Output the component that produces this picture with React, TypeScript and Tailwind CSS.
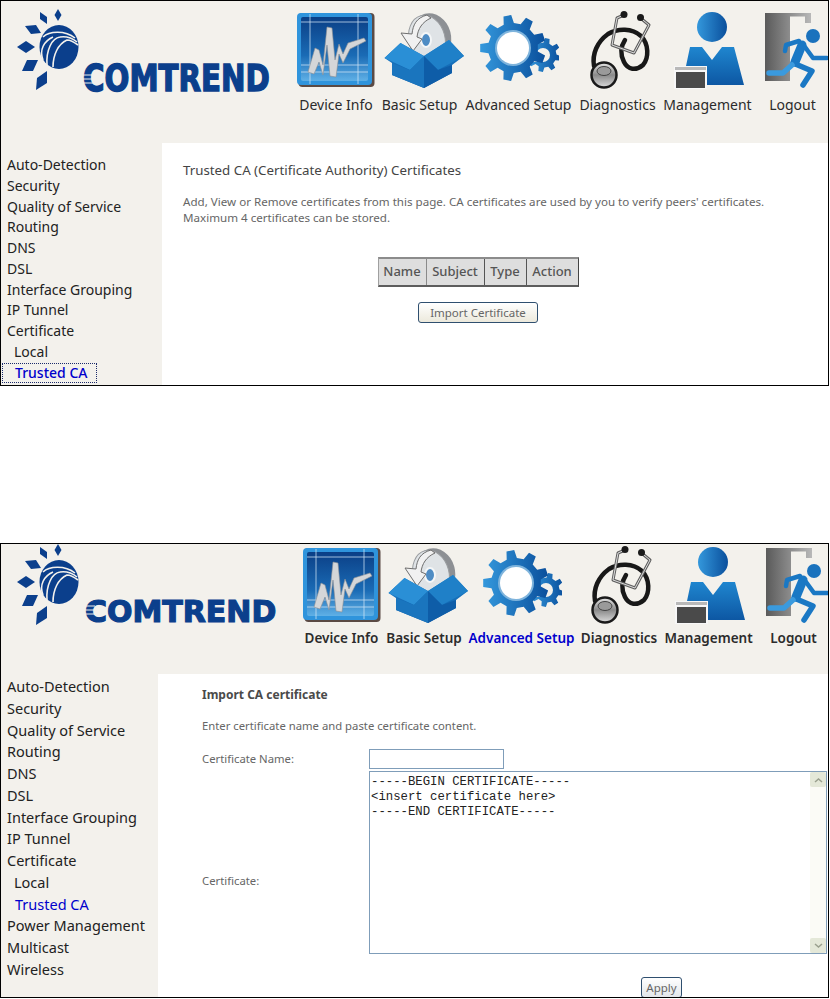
const sans = { fontFamily: '"Noto Sans", sans-serif' }

function range(n: number) {
  return Array.from({ length: n }, (_, i) => i)
}

// toothed outline for the two gears
function gearPath(cx: number, cy: number, outer: number, inner: number, teeth: number, rot = 0) {
  const pts: string[] = []
  range(teeth).forEach(i => {
    const step = (Math.PI * 2) / teeth
    const a = i * step + rot
    const at = (r: number, t: number) => `${(cx + r * Math.cos(a + t * step)).toFixed(1)},${(cy + r * Math.sin(a + t * step)).toFixed(1)}`
    pts.push(at(inner, -0.3), at(outer, -0.17), at(outer, 0.17), at(inner, 0.3))
  })
  return 'M' + pts.join('L') + 'Z'
}

function Defs() {
  return (
    <svg className="absolute w-0 h-0" aria-hidden="true">
      <defs>
        <linearGradient id="boxInner" x1="0" y1="0" x2="0" y2="1">
          <stop offset="0" stopColor="#0b3f86" />
          <stop offset="0.6" stopColor="#1a6bb5" />
          <stop offset="1" stopColor="#5fb0e6" />
        </linearGradient>
        <linearGradient id="blueV" x1="0" y1="0" x2="0" y2="1">
          <stop offset="0" stopColor="#1f86cf" />
          <stop offset="1" stopColor="#0d57a3" />
        </linearGradient>
        <linearGradient id="blueH" x1="0" y1="0" x2="1" y2="0">
          <stop offset="0" stopColor="#3498dc" />
          <stop offset="1" stopColor="#0a4f9c" />
        </linearGradient>
        <linearGradient id="door" x1="0" y1="0" x2="1" y2="0">
          <stop offset="0" stopColor="#5a5a5a" />
          <stop offset="1" stopColor="#b8b8b8" />
        </linearGradient>
        <linearGradient id="metal" x1="0" y1="0" x2="0" y2="1">
          <stop offset="0" stopColor="#e8e8e8" />
          <stop offset="0.5" stopColor="#8a8a8a" />
          <stop offset="1" stopColor="#dcdcdc" />
        </linearGradient>
      </defs>
    </svg>
  )
}

function DeviceIcon() {
  return (
    <svg width="80" height="80" viewBox="0 0 80 80">
      <rect x="2.5" y="3" width="76" height="74" rx="4" fill="#5a4a44" />
      <rect x="1" y="3" width="75" height="72" rx="4" fill="#2f94dc" />
      <rect x="5" y="7" width="67" height="64" rx="2" fill="url(#boxInner)" />
      <path d="M14 4V74M62 4V74M5 12H72M5 55H72M5 62H72" stroke="#cfe4f5" strokeWidth="1" opacity="0.75" fill="none" />
      <path d="M12 62L19 38L23 40L27 55L31 17L36 18L39 50L43 34L47 44L52 33L68 28L70 31L54 39L47 53L43 44L40 67L34 66L31 35L27 65L23 52L18 64Z" fill="#d4d6d8" stroke="#8b8f93" strokeWidth="0.6" />
    </svg>
  )
}

function SetupIcon() {
  return (
    <svg width="80" height="80" viewBox="0 0 80 80" className="overflow-visible">
      <ellipse cx="51" cy="27" rx="20" ry="24" transform="rotate(-15 51 27)" fill="#8d9094" />
      <ellipse cx="47" cy="29" rx="18" ry="24" transform="rotate(-15 47 29)" fill="#dfe3e6" stroke="#9a9da0" strokeWidth="1" />
      <ellipse cx="46" cy="30" rx="5" ry="7" fill="#4e8cc4" stroke="#f4f6f7" strokeWidth="2" />
      <path d="M47 5C36 8 33 15 32 24L21 23L33 41L42 29L37 27C38 19 42 12 51 8Z" fill="#f1f1f1" stroke="#6f6f6f" strokeWidth="1" />
      <path d="M4.5 48L20.5 33L44 46L69 30L84 46L72 55V63L44 78L12 65V53Z" fill="url(#blueV)" />
      <path d="M4.5 48L20.5 33L44 46L30 60Z" fill="#2a8fd6" />
      <path d="M84 46L69 30L44 46L58 60Z" fill="#1f80c8" />
      <path d="M12 53L30 60L44 46V78L12 65Z" fill="#1a75be" />
      <path d="M44 46L58 60L72 55V63L44 78Z" fill="#0e5da8" />
    </svg>
  )
}

function GearIcon() {
  return (
    <svg width="80" height="80" viewBox="0 0 80 80">
      <path d={gearPath(65, 45, 17, 12.5, 8, 0.2)} fill="url(#blueH)" />
      <circle cx="64" cy="45" r="7" fill="#f3f1ec" />
      <rect x="50" y="39" width="8" height="13" fill="#f3f1ec" />
      <path d={gearPath(34, 38, 33, 25, 9, 0.35)} fill="url(#blueH)" />
      <circle cx="34" cy="38" r="18" fill="#7fb4dc" />
      <circle cx="34" cy="38" r="16" fill="#ffffff" />
    </svg>
  )
}

function StethoscopeIcon() {
  return (
    <svg width="80" height="80" viewBox="0 0 80 80" fill="none">
      <path d="M16 56C14 44 19 32 30 24C40 18 54 18 63 26C71 34 71 48 65 55C58 61 50 60 46 52C42 44 43 36 47 30" stroke="#181818" strokeWidth="4.5" strokeLinecap="round" />
      <path d="M46 5L39 8L34 35L56 43L71 15L62.5 8" stroke="#5f5f5f" strokeWidth="3" strokeLinejoin="round" />
      <path d="M46 5L39 8L34 35L56 43L71 15L62.5 8" stroke="#dcdcdc" strokeWidth="1" strokeLinejoin="round" />
      <circle cx="46" cy="4.5" r="3.5" fill="#1a1a1a" />
      <circle cx="62.5" cy="7.5" r="3.5" fill="#1a1a1a" />
      <circle cx="26" cy="65" r="12.5" fill="url(#metal)" stroke="#1a1a1a" strokeWidth="2.5" />
      <ellipse cx="26" cy="61" rx="7" ry="4.5" fill="#9a9a9a" stroke="#444444" strokeWidth="1" />
    </svg>
  )
}

function ManagementIcon() {
  return (
    <svg width="80" height="80" viewBox="0 0 80 80">
      <circle cx="44" cy="17" r="15" fill="url(#blueH)" />
      <path d="M22 37H34L44 50L54 37H66L76 75H14Z" fill="url(#blueV)" />
      <rect x="6" y="56" width="33" height="23" fill="#f7f7f7" />
      <rect x="7" y="57" width="31" height="3" fill="#b9b9b9" />
      <rect x="8" y="62" width="29" height="16" fill="#4a4a4a" />
    </svg>
  )
}

function LogoutIcon() {
  return (
    <svg width="80" height="80" viewBox="0 0 80 80" fill="none">
      <path d="M13 3H59V13H53V6.5H38V71H13Z" fill="url(#door)" />
      <circle cx="61" cy="26" r="7" fill="#1a72bd" />
      <g stroke="#1a78c4" strokeLinecap="round" strokeLinejoin="round">
        <path d="M50 35L43 52" strokeWidth="9" />
        <path d="M47 31L34 35L33 41" strokeWidth="4.5" />
        <path d="M53 37L61 48L75 48" strokeWidth="4.5" />
        <path d="M41 53L60 61L51 75" strokeWidth="5.5" />
        <path d="M40 55L31 63L17 63" strokeWidth="5.5" stroke="#3a9ade" />
      </g>
    </svg>
  )
}

const navItems = [
  { label: 'Device Info', Icon: DeviceIcon },
  { label: 'Basic Setup', Icon: SetupIcon },
  { label: 'Advanced Setup', Icon: GearIcon },
  { label: 'Diagnostics', Icon: StethoscopeIcon },
  { label: 'Management', Icon: ManagementIcon },
  { label: 'Logout', Icon: LogoutIcon },
]

function Logo({ viewBox, width, textY, textX, textSize, scaleY }: { viewBox: string; width: number; textY: number; textX: number; textSize: number; scaleY: number }) {
  return (
    <svg width={width} height="100" viewBox={viewBox} className="shrink-0">
      <g fill="#0b3f8c">
        <path d="M58 9L61.5 15L58 21L54.5 15Z" />
        <path d="M40 12L47 17L47 24L40 19Z" />
        <path d="M25 26L36 25L41 33L31 34Z" />
        <path d="M17 47L26 41L35 47L26 53Z" />
        <path d="M27 60L38 60L33 71L22 71Z" />
        <path d="M47 71L47 83L36 90L37 78Z" />
        <ellipse cx="59" cy="47" rx="19.5" ry="22" />
        <g fill="none" stroke="#f3f1ec" strokeWidth="1.6">
          <path d="M43 37C49 31 65 30 75 38" />
          <path d="M43 60C39 50 44 41 53 37" />
          <path d="M47 65C46 50 52 38 60 37C66 36 72 38 77 42" />
          <path d="M53 67C53 55 58 44 67 40C71 40 74 42 78 45" />
        </g>
      </g>
      <text
        transform={`translate(${textX} ${textY}) scale(1 ${scaleY})`}
        fontFamily="DejaVu Sans, sans-serif"
        fontWeight="bold"
        fontSize={textSize}
        fill="#0b3f8c"
        stroke="#0b3f8c"
        strokeWidth="1.2"
      >
        COMTREND
      </text>
      <path d={`M${textX - 1} ${textY - 16}h11M${textX - 1} ${textY - 12}h11M${textX - 1} ${textY - 8}h11`} stroke="#f3f1ec" strokeWidth="1" />
    </svg>
  )
}

function Header({ second }: { second?: boolean }) {
  const widths = second ? ['w-[83px]', 'w-[82px]', 'w-[113px]', 'w-[82px]', 'w-[97px]', 'w-[71px]'] : ['w-[82px]', 'w-[85px]', 'w-[113px]', 'w-[85px]', 'w-[95px]', 'w-[73px]']
  return (
    <div className={`flex shrink-0 items-start bg-[#f3f1ec] ${second ? 'h-[130px] pt-[1px]' : 'h-[142px] pt-[9px]'}`}>
      <div className={`shrink-0 ${second ? 'w-[299px] -mt-[1px]' : 'w-[294px] -mt-[9px]'}`}>
        {second ? (
          <Logo viewBox="1 9 299 100" width={299} textX={85} textY={87} textSize={30} scaleY={1.03} />
        ) : (
          <Logo viewBox="1 1 294 100" width={294} textX={83} textY={91} textSize={29.3} scaleY={1.26} />
        )}
      </div>
      {navItems.map(({ label, Icon }, i) => (
        <div key={label} className={`flex shrink-0 flex-col items-center ${widths[i]}`}>
          <Icon />
          <span
            style={sans}
            className={`whitespace-nowrap leading-[20px] ${second ? 'mt-[3px] text-[13.5px] font-semibold' : 'mt-[5px] text-[14px]'} ${i === 5 ? 'pl-[2px]' : ''} ${second && i === 2 ? 'text-[#0000cc]' : 'text-[#2b2b2b]'}`}
          >
            {label}
          </span>
        </div>
      ))}
    </div>
  )
}

const sideTop = ['Auto-Detection', 'Security', 'Quality of Service', 'Routing', 'DNS', 'DSL', 'Interface Grouping', 'IP Tunnel', 'Certificate']
const sideBottom = ['Power Management', 'Multicast', 'Wireless']

function Sidebar({ second }: { second?: boolean }) {
  const row = second ? 'h-[21.75px] text-[14.5px] leading-[21.75px]' : 'h-[20.75px] text-[14px] leading-[20.75px]'
  return (
    <div style={sans} className={`shrink-0 bg-[#f3f1ec] text-[#222222] ${second ? 'w-[157px] pt-[2px]' : 'w-[161px] pt-[12px]'}`}>
      {sideTop.map(s => (
        <div key={s} className={`pl-[6px] ${row}`}>{s}</div>
      ))}
      <div className={`pl-[13px] ${row}`}>Local</div>
      {second ? (
        <div className={`pl-[14px] text-[#0000cc] ${row}`}>Trusted CA</div>
      ) : (
        <div className="ml-[1px] h-[20.75px] w-[95px] border border-dotted border-[#1a2a6b] pl-[12px] text-[14px] font-medium leading-[18.75px] text-[#0000cc]">Trusted CA</div>
      )}
      {second && sideBottom.map(s => (
        <div key={s} className={`pl-[6px] ${row}`}>{s}</div>
      ))}
    </div>
  )
}

function TrustedPanel() {
  return (
    <div className="flex h-[386px] w-[829px] flex-col overflow-hidden border border-black bg-white">
      <Header />
      <div className="flex flex-1">
        <Sidebar />
        <div style={sans} className="flex-1 pl-[21px] pt-[18px] text-[#666666]">
          <p className="text-[13.3px] leading-[18px] text-[#444444]">Trusted CA (Certificate Authority) Certificates</p>
          <p className="mt-[15px] whitespace-nowrap text-[11.6px] leading-[16px]">
            Add, View or Remove certificates from this page. CA certificates are used by you to verify peers' certificates.
            <br />
            Maximum 4 certificates can be stored.
          </p>
          <div className="mt-[31px] flex flex-col items-center pr-[55px]">
            <div className="flex h-[30px] border-t-2 border-b-2 border-l border-r border-t-[#8c8c8c] border-b-[#5d5d5d] border-l-[#a0a0a0] border-r-[#444444] bg-[#dedede] text-[13px] font-medium text-[#555555]">
              <div className="flex w-[48px] items-center justify-center border-r border-[#8a8a8a]">Name</div>
              <div className="flex w-[58px] items-center justify-center border-r border-[#555555]">Subject</div>
              <div className="flex w-[42px] items-center justify-center border-r border-[#555555]">Type</div>
              <div className="flex w-[51px] items-center justify-center">Action</div>
            </div>
            <button className="mt-[15px] h-[21px] w-[120px] rounded-[3px] border border-[#2f4f6f] bg-gradient-to-b from-[#ffffff] to-[#ece9dc] text-[11.5px] text-[#666666]">
              Import Certificate
            </button>
          </div>
        </div>
      </div>
    </div>
  )
}

function ImportPanel() {
  return (
    <div className="mt-[157px] flex h-[455px] w-[829px] flex-col overflow-hidden border border-black bg-white">
      <Header second />
      <div className="flex flex-1">
        <Sidebar second />
        <div style={sans} className="flex-1 pl-[44px] pt-[13px] text-[11.3px] text-[#666666]">
          <p className="text-[12px] font-bold leading-[16px] text-[#4a4a4a]">Import CA certificate</p>
          <p className="mt-[15px] leading-[16px]">Enter certificate name and paste certificate content.</p>
          <div className="mt-[15px] flex items-center">
            <span className="w-[167px]">Certificate Name:</span>
            <input className="h-[20px] w-[135px] border border-[#7f9db9] bg-white" />
          </div>
          <div className="mt-[2px] flex h-[183px] w-[625px] items-center">
            <span className="w-[167px] pt-[37px]">Certificate:</span>
            <div className="flex h-full w-[458px] border border-[#7f9db9] bg-white">
              <textarea
                readOnly
                spellCheck={false}
                className="flex-1 resize-none overflow-hidden px-[1px] pt-[3px] font-['Liberation_Mono',monospace] text-[12.3px] leading-[15px] text-[#222222] outline-none"
                defaultValue={'-----BEGIN CERTIFICATE-----\n<insert certificate here>\n-----END CERTIFICATE-----'}
              />
              <div className="flex w-[16px] flex-col justify-between bg-[#fbfbf6]">
                <div className="flex h-[15px] items-center justify-center rounded-[2px] bg-[#e4e8d8]">
                  <svg width="9" height="6" viewBox="0 0 9 6" fill="none"><path d="M1 5L4.5 2L8 5" stroke="#9aa08e" strokeWidth="1.5" /></svg>
                </div>
                <div className="flex h-[15px] items-center justify-center rounded-[2px] bg-[#e4e8d8]">
                  <svg width="9" height="6" viewBox="0 0 9 6" fill="none"><path d="M1 1L4.5 4L8 1" stroke="#9aa08e" strokeWidth="1.5" /></svg>
                </div>
              </div>
            </div>
          </div>
          <div className="mt-[23px] flex w-[480px] justify-end">
            <button className="h-[21px] w-[41px] rounded-[3px] border border-[#2f4f6f] bg-gradient-to-b from-[#ffffff] to-[#e2e6ea] text-[11.5px] text-[#666666]">
              Apply
            </button>
          </div>
        </div>
      </div>
    </div>
  )
}

export default function App() {
  return (
    <div className="w-[830px] bg-white">
      <Defs />
      <TrustedPanel />
      <ImportPanel />
    </div>
  )
}
